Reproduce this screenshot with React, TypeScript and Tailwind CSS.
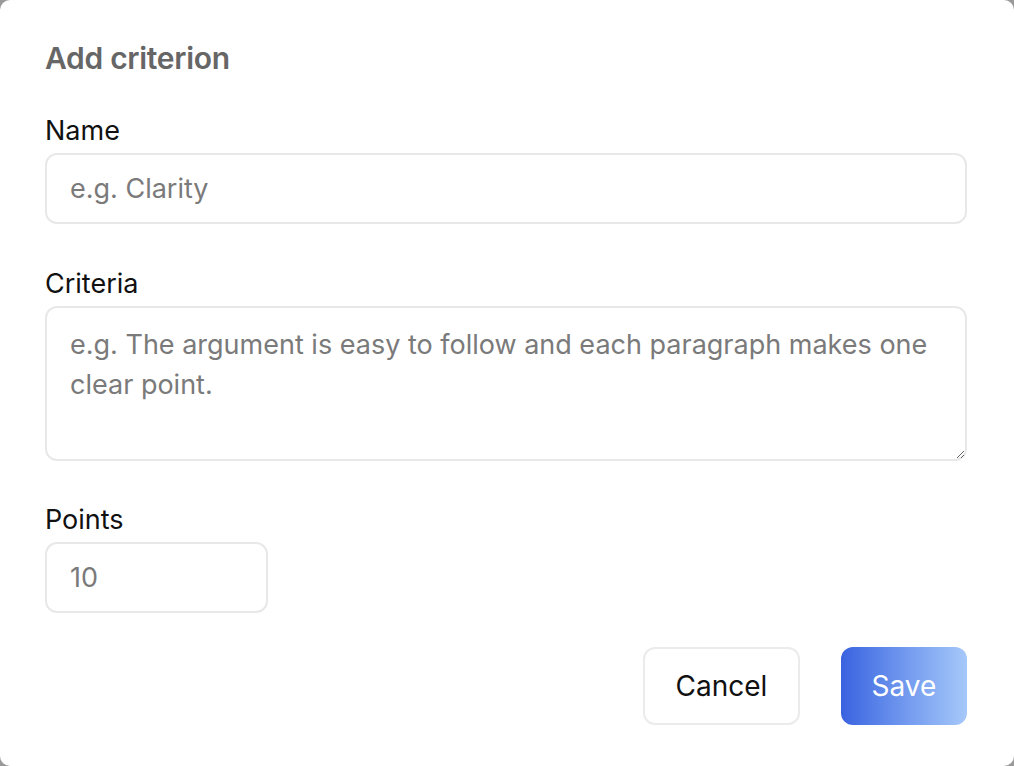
import React from "react";

export default function App() {
  return (
    <div className="h-[766px] w-[1014px] bg-[#9a9a9a]" style={{ fontFamily: "Inter, 'Noto Sans', sans-serif" }}>
      <div className="h-full w-full rounded-[10px] bg-white pl-[45px] pr-[47px] pt-[40px] flex flex-col">
        <h2 className="text-[30px] leading-[36px] font-semibold text-[#666666] tracking-[-0.3px]">Add criterion</h2>

        <label className="mt-[39px] text-[27px] leading-[32px] text-[#111111]">Name</label>
        <input
          placeholder="e.g. Clarity"
          className="mt-[6px] h-[71px] w-full rounded-[12px] border-2 border-[#e8e8e8] px-[23px] text-[27px] text-[#111] placeholder:text-[#7a7a7a] outline-none"
        />

        <label className="mt-[44px] text-[27px] leading-[32px] text-[#111111]">Criteria</label>
        <textarea
          placeholder="e.g. The argument is easy to follow and each paragraph makes one clear point."
          className="mt-[6px] h-[155px] w-full rounded-[12px] border-2 border-[#e8e8e8] px-[23px] pt-[17px] text-[27px] leading-[40px] text-[#111] placeholder:text-[#7a7a7a] outline-none"
        />

        <label className="mt-[43px] text-[27px] leading-[32px] text-[#111111]">Points</label>
        <input
          placeholder="10"
          className="mt-[6px] h-[71px] w-[223px] rounded-[12px] border-2 border-[#e8e8e8] px-[23px] text-[27px] text-[#111] placeholder:text-[#7a7a7a] outline-none"
        />

        <div className="mt-[34px] flex justify-end gap-[41px]">
          <button className="h-[78px] w-[157px] rounded-[12px] border-2 border-[#ebebeb] bg-white text-[28px] text-[#111]">
            Cancel
          </button>
          <button className="h-[78px] w-[126px] rounded-[12px] bg-gradient-to-r from-[#3a62e0] via-[#7198ee] to-[#a6c8f9] text-[28px] text-white">
            Save
          </button>
        </div>
      </div>
    </div>
  );
}
